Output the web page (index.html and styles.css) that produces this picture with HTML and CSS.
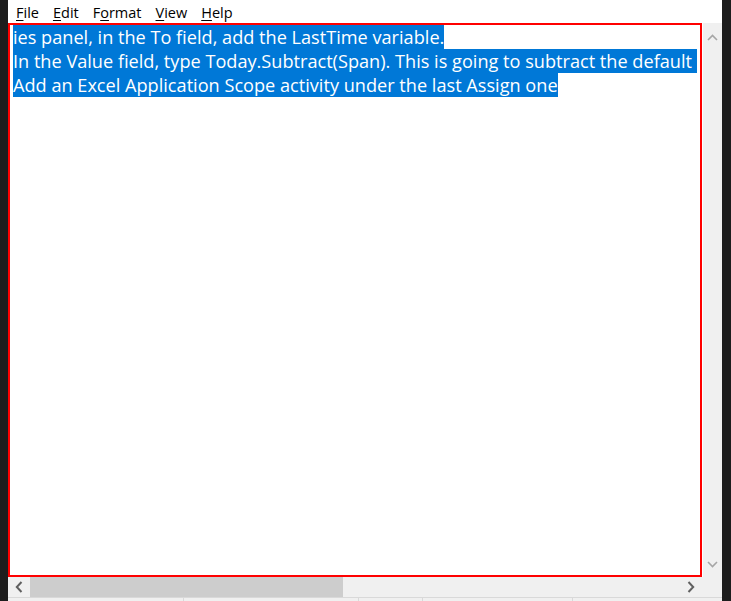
FILE: index.html
```html
<!DOCTYPE html>
<html>
<head>
<meta charset="utf-8">
<link rel="stylesheet" href="styles.css">
</head>
<body>
<div class="desk">
  <div class="window">
    <div class="menubar">
      <span class="menu"><u>F</u>ile</span>
      <span class="menu"><u>E</u>dit</span>
      <span class="menu">F<u>o</u>rmat</span>
      <span class="menu"><u>V</u>iew</span>
      <span class="menu"><u>H</u>elp</span>
    </div>
    <div class="body">
      <div class="editor">
        <div class="line"><span class="sel">ies panel, in the To field, add the LastTime variable.</span></div>
        <div class="line"><span class="sel">In the Value field, type Today.Subtract(Span). This is going to subtract the default </span></div>
        <div class="line"><span class="sel">Add an Excel Application Scope activity under the last Assign one</span></div>
      </div>
      <div class="vscroll">
        <svg class="varrow" width="11" height="7" viewBox="0 0 11 7"><path d="M1 6 L5.5 1.5 L10 6" fill="none" stroke="#a6a6a6" stroke-width="1.6"/></svg>
        <svg class="varrow" width="11" height="7" viewBox="0 0 11 7"><path d="M1 1 L5.5 5.5 L10 1" fill="none" stroke="#a6a6a6" stroke-width="1.6"/></svg>
      </div>
    </div>
    <div class="hrow">
      <div class="hscroll">
        <div class="hbtn"><svg width="8" height="12" viewBox="0 0 8 12"><path d="M6.5 1 L1.8 6 L6.5 11" fill="none" stroke="#606060" stroke-width="2"/></svg></div>
        <div class="thumb"></div>
        <div class="track"></div>
        <div class="hbtn"><svg width="8" height="12" viewBox="0 0 8 12"><path d="M1.5 1 L6.2 6 L1.5 11" fill="none" stroke="#606060" stroke-width="2"/></svg></div>
      </div>
      <div class="corner"></div>
    </div>
    <div class="status">
      <div class="cell c1"></div>
      <div class="cell c2"></div>
      <div class="cell c3"></div>
      <div class="cell c4"></div>
      <div class="cell c5"></div>
    </div>
  </div>
</div>
</body>
</html>
```
FILE: styles.css
```css
html, body {
  margin: 0;
  padding: 0;
  width: 731px;
  height: 601px;
  overflow: hidden;
  background: #1c1c1c;
}
.desk {
  display: flex;
  height: 601px;
  padding-left: 8px;
  background: #1d1d1d;
}
.window {
  width: 714px;
  height: 601px;
  display: flex;
  flex-direction: column;
  background: #ffffff;
}
.menubar {
  height: 23px;
  display: flex;
  align-items: center;
  padding-left: 8px;
  font-family: "Open Sans", "Noto Sans", sans-serif;
  font-size: 14.5px;
  color: #000;
  background: #fff;
  box-sizing: border-box;
  padding-top: 2px;
}
.menu {
  margin-right: 14px;
}
.menu u {
  text-decoration-thickness: 1px;
  text-underline-offset: 2px;
}
.body {
  display: flex;
  height: 554px;
}
.editor {
  width: 694px;
  height: 554px;
  box-sizing: border-box;
  border: 2px solid #ff0000;
  padding: 0 0 0 3px;
  background: #fff;
  font-family: "Open Sans", "Noto Sans", sans-serif;
  font-size: 18.15px;
  overflow: hidden;
}
.line {
  height: 24px;
  line-height: 24px;
}
.sel {
  display: inline-block;
  height: 24px;
  line-height: 24px;
  background: #0078d7;
  color: #ffffff;
  white-space: pre;
}
.vscroll {
  margin-left: 1px;
  width: 19px;
  height: 554px;
  background: #f0f0f0;
  display: flex;
  flex-direction: column;
  justify-content: space-between;
  align-items: center;
  padding: 11px 0 9px;
  box-sizing: border-box;
}
.hrow {
  display: flex;
  height: 20px;
  background: #f0f0f0;
}
.hscroll {
  width: 694px;
  display: flex;
  align-items: stretch;
}
.hbtn {
  width: 22px;
  display: flex;
  align-items: center;
  justify-content: center;
}
.thumb {
  width: 313px;
  background: #cdcdcd;
}
.track {
  flex: 1;
}
.corner {
  flex: 1;
}
.status {
  flex: 1;
  display: flex;
  background: #f0f0f0;
  border-top: 1px solid #d9d9d9;
}
.cell {
  border-right: 1px solid #d9d9d9;
}
.c1 { width: 175px; }
.c2 { width: 174px; }
.c3 { width: 63px; }
.c4 { width: 149px; }
.c5 { flex: 1; border-right: none; }
```
